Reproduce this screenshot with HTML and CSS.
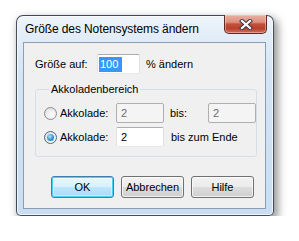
FILE: index.html
```html
<!DOCTYPE html>
<html lang="de">
<head>
<meta charset="utf-8">
<title>Größe des Notensystems ändern</title>
<link rel="stylesheet" href="styles.css">
</head>
<body>
<div class="window">
  <div class="titlebar">
    <span class="title">Größe des Notensystems ändern</span>
    <span class="close">
      <svg width="14" height="11" viewBox="0 0 14 11">
        <path d="M3 2 L11 9 M11 2 L3 9" stroke="#3b3b48" stroke-width="4.2" stroke-linecap="square" fill="none"/>
        <path d="M3 2 L11 9 M11 2 L3 9" stroke="#ffffff" stroke-width="2.2" stroke-linecap="square" fill="none"/>
      </svg>
    </span>
  </div>
  <div class="client">
    <div class="size-row">
      <span class="label">Größe auf:</span>
      <span class="edit size-edit"><span class="sel">100</span></span>
      <span class="after">% ändern</span>
    </div>
    <fieldset class="group">
      <legend>Akkoladenbereich</legend>
      <div class="grid">
        <span class="radio-label"><span class="radio"></span>Akkolade:</span>
        <span class="edit disabled">2</span>
        <span class="mid">bis:</span>
        <span class="edit disabled">2</span>
        <span class="radio-label"><span class="radio checked"></span>Akkolade:</span>
        <span class="edit">2</span>
        <span class="mid wide">bis zum Ende</span>
      </div>
    </fieldset>
    <div class="buttons">
      <span class="btn default">OK</span>
      <span class="btn">Abbrechen</span>
      <span class="btn">Hilfe</span>
    </div>
  </div>
</div>
</body>
</html>
```

FILE: styles.css
```css
html, body {
  margin: 0;
  background: #ffffff;
}
body {
  padding: 15px 0 0 16px;
  font-family: "Liberation Sans", Arial, sans-serif;
  font-size: 11px;
  color: #000;
}
.window {
  box-sizing: border-box;
  width: 258px;
  height: 201px;
  border: 1px solid rgba(40, 48, 58, 0.85);
  border-radius: 7px 7px 5px 5px;
  background: linear-gradient(#eef4fb 0px, #e2edf8 20px, #d3e4f4 60px, #c9def2 100%);
  box-shadow: 3px 4px 9px 1px rgba(0, 0, 0, 0.42), inset 0 0 0 1px rgba(255,255,255,0.7);
  padding: 0 7px 6px 6px;
  display: flex;
  flex-direction: column;
}
.titlebar {
  height: 26px;
  display: flex;
  justify-content: space-between;
  align-items: flex-start;
}
.title {
  padding: 5px 0 0 2px;
  font-size: 12px;
  line-height: 16px;
  letter-spacing: -0.1px;
  color: #000;
}
.close {
  box-sizing: border-box;
  width: 43px;
  height: 19px;
  margin: -1px -1px 0 0;
  border: 1px solid #5e2a22;
  border-top: none;
  border-radius: 0 0 5px 5px;
  background: linear-gradient(#eab0a2 0%, #dc8f7e 40%, #c4503b 50%, #b8412d 75%, #d0705a 100%);
  box-shadow: inset 0 0 0 1px rgba(255, 220, 210, 0.45);
  display: flex;
  align-items: center;
  justify-content: center;
}
.client {
  flex: 1;
  background: #f0f0f0;
  border: 1px solid #8a9db3;
  padding: 11px 0 0 11px;
  display: flex;
  flex-direction: column;
}
.size-row {
  display: flex;
  align-items: center;
  height: 20px;
}
.label {
  width: 62px;
}
.edit {
  box-sizing: border-box;
  height: 20px;
  border: 1px solid #abadb3;
  border-top-color: #abadb3;
  border-left-color: #e2e3ea;
  border-right-color: #dbdfe6;
  border-bottom-color: #e3e9ef;
  border-radius: 2px;
  background: #ffffff;
  display: flex;
  align-items: center;
  padding-left: 4px;
  width: 48px;
}
.size-edit {
  width: 43px;
  padding-left: 1px;
}
.sel {
  background: #3399ff;
  color: #ffffff;
  padding: 0 4px 0 1px;
  line-height: 15px;
}
.after {
  margin-left: 6px;
}
.group {
  box-sizing: border-box;
  width: 222px;
  margin: 9px 0 0 0;
  padding: 7px 0 9px 8px;
  border: 1px solid #d5dfe5;
  border-radius: 3px;
  min-width: 0;
}
.group legend {
  padding: 0 2px;
  margin-left: 5px;
  line-height: 13px;
}
.grid {
  display: grid;
  grid-template-columns: 72px 48px auto 48px;
  grid-auto-rows: 20px;
  row-gap: 4px;
  align-items: center;
}
.radio-label {
  display: flex;
  align-items: center;
}
.radio {
  box-sizing: border-box;
  width: 13px;
  height: 13px;
  border-radius: 50%;
  border: 1px solid #8a8c8e;
  background: radial-gradient(circle at 60% 65%, #ffffff 0%, #f1f1f1 40%, #d4d4d4 100%);
  margin-right: 3px;
  display: flex;
  align-items: center;
  justify-content: center;
}
.radio.checked {
  border-color: #4f6b84;
}
.radio.checked::after {
  content: "";
  width: 7px;
  height: 7px;
  border-radius: 50%;
  background: radial-gradient(circle at 40% 35%, #b6e6fb 0%, #47a3d8 45%, #165b8c 100%);
}
.edit.disabled {
  background: #f4f4f4;
  color: #6d6d6d;
  border-color: #afafaf;
}
.mid {
  padding-left: 6px;
}
.mid.wide {
  grid-column: 3 / 5;
  padding-left: 7px;
}
.buttons {
  display: flex;
  gap: 7px;
  margin: 19px 0 0 16px;
}
.btn {
  box-sizing: border-box;
  width: 63px;
  height: 22px;
  border: 1px solid #707070;
  border-radius: 3px;
  background: linear-gradient(#f2f2f2 0%, #ebebeb 49%, #dddddd 50%, #cfcfcf 100%);
  box-shadow: inset 0 0 0 1px rgba(255, 255, 255, 0.7);
  display: flex;
  align-items: center;
  justify-content: center;
}
.btn.default {
  border-color: #3c7fb1;
  background: linear-gradient(#eaf6fd 0%, #d9f0fc 49%, #bee6fd 50%, #a7d9f5 100%);
  box-shadow: inset 0 0 0 1px #48d2f8, inset 0 0 0 2px rgba(255,255,255,0.4);
}
```
